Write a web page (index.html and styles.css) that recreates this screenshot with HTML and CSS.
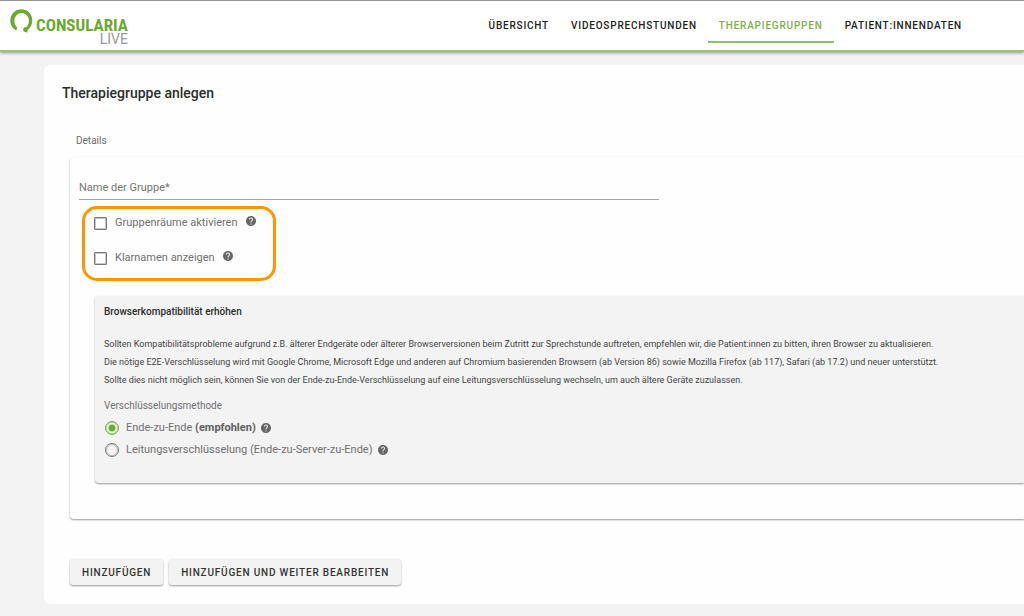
FILE: index.html
```html
<!DOCTYPE html>
<html lang="de">
<head>
<meta charset="utf-8">
<title>Consularia Live – Therapiegruppe anlegen</title>
<meta name="viewport" content="width=device-width, initial-scale=1">
<link rel="stylesheet" href="styles.css">
</head>
<body>
<svg class="sprite" aria-hidden="true">
  <symbol id="help" viewBox="2 2 20 20"><path d="M12 2C6.48 2 2 6.48 2 12s4.48 10 10 10 10-4.48 10-10S17.52 2 12 2zm1 17h-2v-2h2v2zm2.07-7.75l-.9.92C13.45 12.9 13 13.5 13 15h-2v-.5c0-1.1.45-2.1 1.17-2.83l1.24-1.26c.37-.36.59-.86.59-1.41 0-1.1-.9-2-2-2s-2 .9-2 2H8c0-2.21 1.79-4 4-4s4 1.79 4 4c0 .88-.36 1.68-.93 2.25z"/></symbol>
</svg>
<header class="topbar">
  <a class="logo" href="#">
    <svg class="logo-mark" viewBox="0 0 23 24" aria-hidden="true">
      <path d="M6.500 21.500C2.500 19.800 0.300 16 0.300 11.600A11 11.300 0 0 1 22.300 11.600C22.300 15.500 20.500 18.700 17.900 20.700C17.300 21.300 17.600 22.300 17.300 23.600C16.300 22.700 14.800 23.400 13.400 22C12.700 20.600 13.300 18.900 14.800 18.300C16.300 18.700 18.900 16.500 18.900 11.800A7.300 7.800 0 0 0 4.300 11.800C4.300 14.500 5 16.200 7 18.200Z"/>
    </svg>
    <span class="logo-text"><span class="logo-name">CONSULARIA</span><span class="logo-sub">LIVE</span></span>
  </a>
  <nav class="nav">
    <a class="nav-link" href="#">ÜBERSICHT</a>
    <a class="nav-link" href="#">VIDEOSPRECHSTUNDEN</a>
    <a class="nav-link nav-link-active" href="#" aria-current="page">THERAPIEGRUPPEN</a>
    <a class="nav-link" href="#">PATIENT:INNENDATEN</a>
  </nav>
</header>
<main class="page">
  <h1 class="title">Therapiegruppe anlegen</h1>
  <form class="form">
    <h2 class="section-label">Details</h2>
    <section class="card">
      <input class="text-field" type="text" placeholder="Name der Gruppe*" aria-label="Name der Gruppe" required>
      <div class="highlight">
        <div class="option">
          <input class="check" type="checkbox" id="rooms">
          <label for="rooms">Gruppenräume aktivieren</label>
          <svg class="help help-raised" role="img" aria-label="Hilfe"><use href="#help"/></svg>
        </div>
        <div class="option">
          <input class="check" type="checkbox" id="names">
          <label for="names">Klarnamen anzeigen</label>
          <svg class="help help-raised" role="img" aria-label="Hilfe"><use href="#help"/></svg>
        </div>
      </div>
      <section class="panel">
        <h3 class="panel-title">Browserkompatibilität erhöhen</h3>
        <p class="panel-text">Sollten Kompatibilitätsprobleme aufgrund z.B. älterer Endgeräte oder älterer Browserversionen beim Zutritt zur Sprechstunde auftreten, empfehlen wir, die Patient:innen zu bitten, ihren Browser zu aktualisieren.<br>Die nötige E2E-Verschlüsselung wird mit Google Chrome, Microsoft Edge und anderen auf Chromium basierenden Browsern (ab Version 86) sowie Mozilla Firefox (ab 117), Safari (ab 17.2) und neuer unterstützt.<br>Sollte dies nicht möglich sein, können Sie von der Ende-zu-Ende-Verschlüsselung auf eine Leitungsverschlüsselung wechseln, um auch ältere Geräte zuzulassen.</p>
        <fieldset class="methods">
          <legend class="legend">Verschlüsselungsmethode</legend>
          <div class="method">
            <input class="radio" type="radio" name="method" id="e2e" checked>
            <label for="e2e">Ende-zu-Ende <strong>(empfohlen)</strong></label>
            <svg class="help" role="img" aria-label="Hilfe"><use href="#help"/></svg>
          </div>
          <div class="method">
            <input class="radio" type="radio" name="method" id="line">
            <label for="line">Leitungsverschlüsselung (Ende-zu-Server-zu-Ende)</label>
            <svg class="help" role="img" aria-label="Hilfe"><use href="#help"/></svg>
          </div>
        </fieldset>
      </section>
    </section>
    <div class="actions">
      <button class="button" type="submit">HINZUFÜGEN</button>
      <button class="button" type="submit">HINZUFÜGEN UND WEITER BEARBEITEN</button>
    </div>
  </form>
</main>
</body>
</html>
```
FILE: styles.css
```css
* { box-sizing: border-box; }
body {
  margin: 0;
  background: #f3f3f3;
  color: #2c2c2c;
  font-family: Roboto, "Liberation Sans", sans-serif;
  font-size: 11px;
  line-height: 16px;
}
.sprite { display: none; }
.topbar {
  display: flex;
  justify-content: space-between;
  height: 52px;
  padding: 0 51px 0 10px;
  background: #fff;
  border-top: 1px solid #949494;
  border-bottom: 2px solid #9ac476;
  box-shadow: 0 1px 3px rgba(0, 0, 0, .4);
}
.logo { display: flex; gap: 3px; padding-top: 8px; text-decoration: none; }
.logo-mark { width: 23px; height: 24px; fill: #6aaa2e; }
.logo-text { display: flex; flex-direction: column; align-items: flex-end; padding-top: 8px; }
.logo-name { color: #6aaa2e; font-family: "Roboto Condensed", Roboto, sans-serif; font-size: 17px; line-height: 16px; font-weight: 700; }
.logo-sub { color: #999; font-size: 14px; line-height: 12px; }
.nav { display: flex; }
.nav-link {
  height: 42px;
  padding: 17px 11px 0;
  border-bottom: 2px solid transparent;
  color: #222;
  font-size: 10px;
  line-height: 16px;
  font-weight: 500;
  letter-spacing: .08em;
  text-decoration: none;
}
.nav-link-active { color: #7cb04b; border-color: #8fbe66; }
.page {
  margin: 13px 0 12px 44px;
  padding: 18px 0 19px 18px;
  background: #fefefe;
  border-radius: 6px 0 0 6px;
}
.title { margin: 0; font-size: 14px; line-height: 20px; font-weight: 500; }
.form { padding-left: 8px; }
.section-label { margin: 30px 0 8px 6px; color: #6c6c6c; font-size: 10px; line-height: 16px; font-weight: 400; }
.card {
  padding: 21px 0 36px 9px;
  border-radius: 4px 0 0 4px;
  box-shadow: 0 1px 2px rgba(0, 0, 0, .4);
}
.text-field {
  display: block;
  width: 61.4%;
  height: 22px;
  padding: 0 0 2px;
  border: 0;
  border-bottom: 1px solid #a5a5a5;
  background: transparent;
  color: #2c2c2c;
  font: inherit;
}
.text-field::placeholder { color: #757575; opacity: 1; }
.highlight {
  display: flex;
  flex-direction: column;
  gap: 19px;
  width: max-content;
  margin: 6px 0 0 3px;
  padding: 6px 17px 12px 9px;
  border: 3px solid #ff9500;
  border-radius: 15px;
}
.option, .method { display: flex; align-items: center; color: #707070; }
.check {
  appearance: none;
  width: 13px;
  height: 13px;
  margin: 0 8px 0 0;
  border: 1px solid #777;
  border-radius: 1px;
  outline: 1px solid rgba(119, 119, 119, .4);
  outline-offset: -2px;
}
.check:checked { background: #6aaa2e; }
.help { width: 10px; height: 10px; margin-left: 5px; fill: #666; }
.help-raised { margin: 0 0 4px 8px; }
.panel {
  margin: 15px 0 0 16px;
  padding: 8px 0 22px 9px;
  background: #f3f3f3;
  border-radius: 4px 0 0 4px;
  box-shadow: 0 1px 2px rgba(0, 0, 0, .4);
}
.panel-title { margin: 0 0 15px; font-size: 10px; line-height: 16px; font-weight: 500; }
.panel-text { margin: 0; color: #444; font-size: 9px; line-height: 18px; }
.methods { margin: 0; padding: 0; border: 0; }
.legend { padding: 9px 0 3px; color: #707070; font-size: 10px; }
.method { height: 22px; }
.method strong { color: #606060; font-weight: 700; }
.radio {
  appearance: none;
  width: 14px;
  height: 14px;
  margin: 0 7px 0 1px;
  border: 1px solid #777;
  border-radius: 50%;
  outline: 1px solid rgba(119, 119, 119, .4);
  outline-offset: -2px;
}
.radio:checked {
  border-color: #6aaa2e;
  outline-color: rgba(106, 170, 46, .4);
  background: radial-gradient(circle, #6aaa2e 3px, transparent 4px);
}
.actions { display: flex; gap: 6px; margin-top: 40px; }
.button {
  height: 26px;
  padding: 0 12px;
  border: 0;
  border-radius: 3px;
  background: #f3f3f3;
  box-shadow: 0 1px 2px rgba(0, 0, 0, .4);
  color: #333;
  font-family: inherit;
  font-size: 10px;
  font-weight: 500;
  letter-spacing: .08em;
}
```
